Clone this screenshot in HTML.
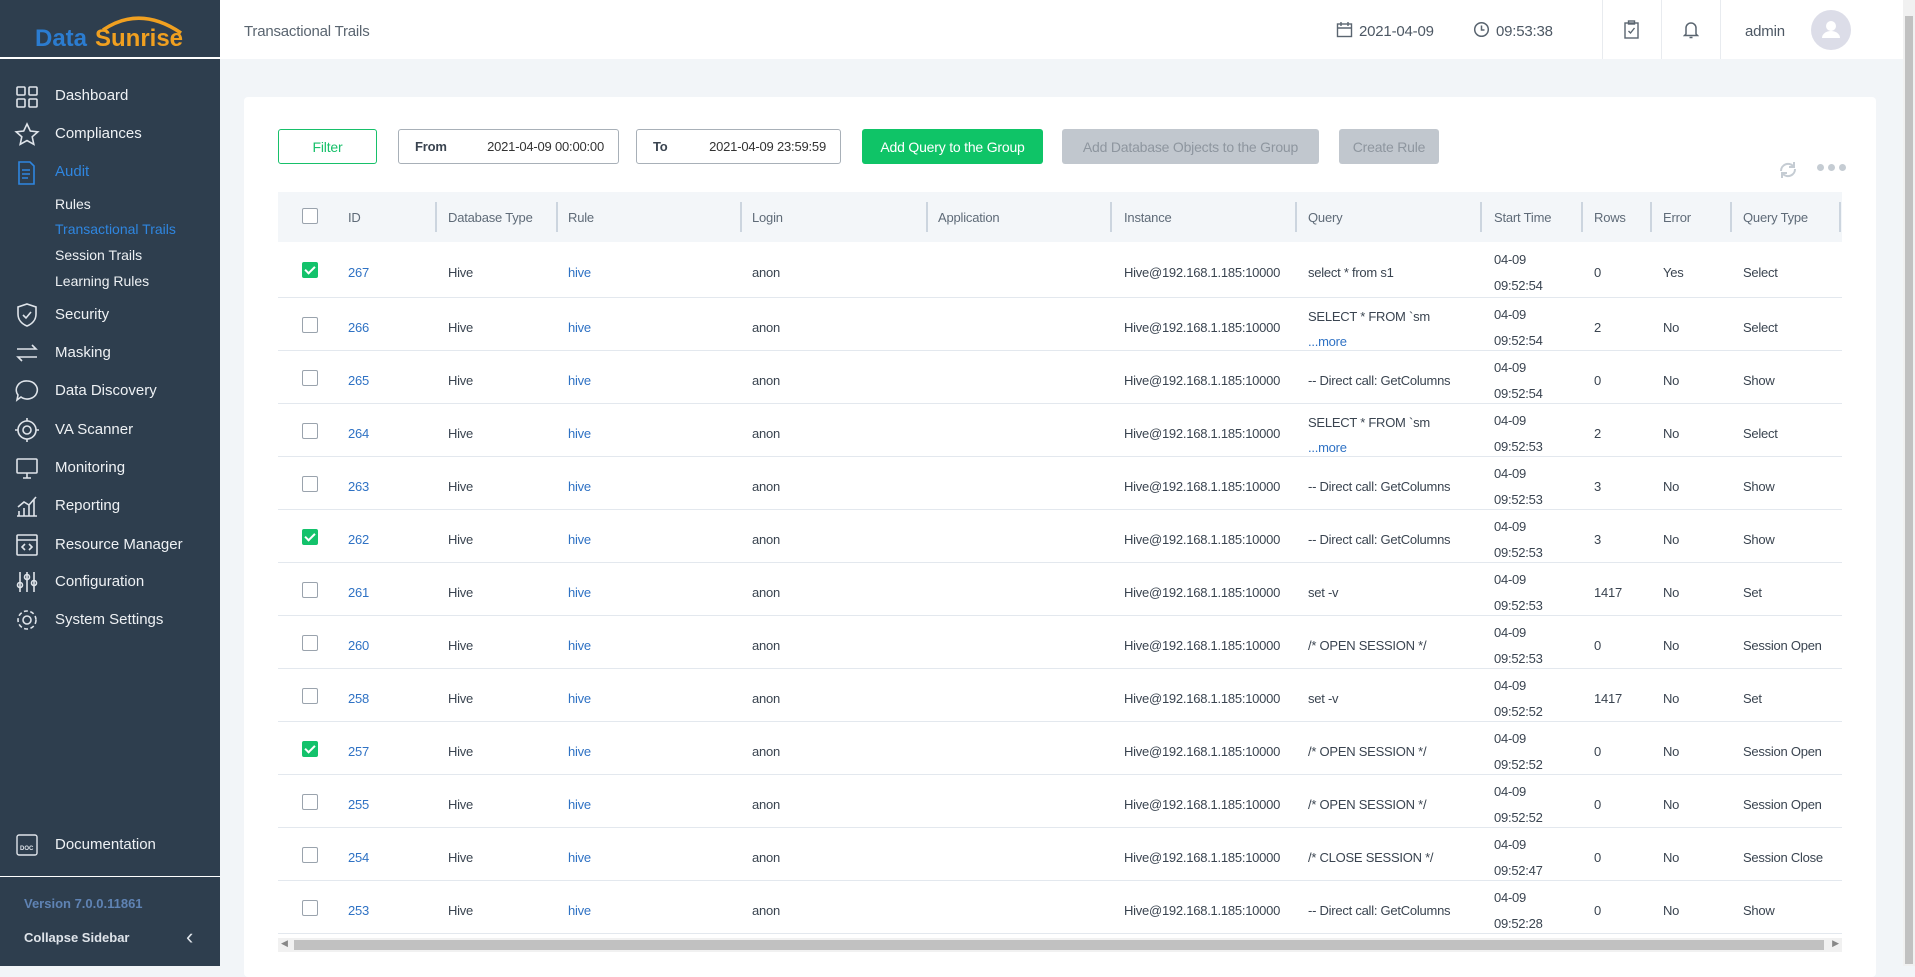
<!DOCTYPE html>
<html><head><meta charset="utf-8"><style>
*{box-sizing:border-box;margin:0;padding:0}
body{width:1915px;height:966px;overflow:hidden;background:#f2f5f8;font-family:"Liberation Sans",sans-serif;position:relative;color:#3a4450}
.sb{position:absolute;left:0;top:0;width:220px;height:966px;background:#2e3e4e;color:#e8ecf0}
.logo{height:59px;border-bottom:2px solid #fff;position:relative}
.mi{position:absolute;left:55px;font-size:15px;color:#eef1f4;margin-top:2px}
.ic{position:absolute;left:14px;width:26px;height:26px;margin-top:2px}
.sub{position:absolute;left:55px;font-size:14px;color:#eef1f4;margin-top:1px}
.hdr{position:absolute;left:220px;top:0;width:1683px;height:59px;background:#fff}
.sep{position:absolute;top:0;width:1px;height:59px;background:#e8ebef}
.card{position:absolute;left:244px;top:97px;width:1632px;height:880px;background:#fff;border-radius:4px}
.btn{position:absolute;top:129px;height:35px;border-radius:3px;font-size:14px;display:flex;align-items:center;justify-content:center;letter-spacing:-0.2px}
.th{position:absolute;left:278px;top:192px;width:1564px;height:50px;background:#f3f6f9}
.th span{position:absolute;top:18px;font-size:13px;color:#5f6b78;letter-spacing:-0.2px}
.th i{position:absolute;top:10px;width:2px;height:30px;background:#ccd5df}
.row{position:absolute;left:278px;width:1564px;border-bottom:1px solid #e3e8ee;font-size:13px;color:#3a4450;letter-spacing:-0.25px}
.row span{position:absolute;margin-top:3px}
.cb{position:absolute;left:24px;width:16px;height:16px;border:1px solid #9aa3ad;border-radius:2px;background:#fff}
.cb.on{background:#13c26b;border-color:#13c26b}
.cb.on:after{content:"";position:absolute;left:4px;top:1px;width:4px;height:8px;border:solid #fff;border-width:0 2px 2px 0;transform:rotate(45deg)}
.lk{color:#2f72c4}
.ht{position:absolute;top:23px;font-size:15px;color:#4d5864;letter-spacing:-0.2px}
</style></head><body>
<div class="sb">
 <div class="logo"><svg width="220" height="59" style="position:absolute;left:0;top:0"><path d="M103 30 Q140 5 181 33" stroke="#f0a020" stroke-width="3.5" fill="none"/><text x="35" y="46" font-family="Liberation Sans" font-weight="bold" font-size="24" fill="#2b7cd0">Data</text><text x="95" y="46" font-family="Liberation Sans" font-weight="bold" font-size="24" fill="#f0a020">Sunrise</text></svg></div>
 <svg class="ic" style="top:82px" viewBox="0 0 26 26" fill="none" stroke="#dfe4ea" stroke-width="1.6"><rect x="3" y="3" width="8" height="8" rx="1"/><rect x="15" y="3" width="8" height="8" rx="1"/><rect x="3" y="15" width="8" height="8" rx="1"/><rect x="15" y="15" width="8" height="8" rx="1"/></svg>
 <div class="mi" style="top:85px">Dashboard</div>
 <svg class="ic" style="top:120px" viewBox="0 0 26 26" fill="none" stroke="#dfe4ea" stroke-width="1.6"><path d="M13 2l3.3 7 7.5.8-5.6 5 1.6 7.5L13 18.5 6.2 22.3l1.6-7.5-5.6-5 7.5-.8z"/></svg>
 <div class="mi" style="top:123px">Compliances</div>
 <svg class="ic" style="top:158px" viewBox="0 0 26 26" fill="none" stroke="#2f86e0" stroke-width="1.6"><path d="M5 2h11l4 4v18H5z"/><path d="M8 10h8M8 14h8M8 18h6"/></svg>
 <div class="mi" style="top:161px;color:#2f86e0">Audit</div>
 <div class="sub" style="top:195px">Rules</div>
 <div class="sub" style="top:220px;color:#2f86e0">Transactional Trails</div>
 <div class="sub" style="top:246px">Session Trails</div>
 <div class="sub" style="top:272px">Learning Rules</div>
 <svg class="ic" style="top:300px" viewBox="0 0 26 26" fill="none" stroke="#dfe4ea" stroke-width="1.6"><path d="M13 2l9 3v7c0 6-4 10-9 12-5-2-9-6-9-12V5z"/><path d="M9 13l3 3 5-6"/></svg>
 <div class="mi" style="top:342px">Masking</div>
 <div class="mi" style="top:304px">Security</div>
 <svg class="ic" style="top:338px" viewBox="0 0 26 26" fill="none" stroke="#dfe4ea" stroke-width="1.6"><path d="M3 9h19l-4-4M23 17H4l4 4"/></svg>
 <svg class="ic" style="top:376px" viewBox="0 0 26 26" fill="none" stroke="#dfe4ea" stroke-width="1.6"><path d="M13 3a10 9 0 1 1-6 16l-4 3 1-5A10 9 0 0 1 13 3z"/></svg>
 <div class="mi" style="top:380px">Data Discovery</div>
 <svg class="ic" style="top:415px" viewBox="0 0 26 26" fill="none" stroke="#dfe4ea" stroke-width="1.6"><circle cx="13" cy="13" r="9"/><circle cx="13" cy="13" r="4"/><path d="M13 1v3M13 22v3M1 13h3M22 13h3"/></svg>
 <div class="mi" style="top:419px">VA Scanner</div>
 <svg class="ic" style="top:453px" viewBox="0 0 26 26" fill="none" stroke="#dfe4ea" stroke-width="1.6"><rect x="3" y="4" width="20" height="14" rx="1"/><path d="M9 23h8M13 18v5"/></svg>
 <div class="mi" style="top:457px">Monitoring</div>
 <svg class="ic" style="top:491px" viewBox="0 0 26 26" fill="none" stroke="#dfe4ea" stroke-width="1.6"><path d="M3 23h20M5 23v-5M10 23v-8M15 23v-11M20 23V6M4 14l6-5 5 3 7-8"/></svg>
 <div class="mi" style="top:495px">Reporting</div>
 <svg class="ic" style="top:530px" viewBox="0 0 26 26" fill="none" stroke="#dfe4ea" stroke-width="1.6"><rect x="3" y="3" width="20" height="20" rx="1"/><path d="M3 8h20M11 12l-3 3 3 3M15 12l3 3-3 3"/></svg>
 <div class="mi" style="top:534px">Resource Manager</div>
 <svg class="ic" style="top:567px" viewBox="0 0 26 26" fill="none" stroke="#dfe4ea" stroke-width="1.6"><path d="M6 3v20M13 3v20M20 3v20"/><circle cx="6" cy="16" r="2.5"/><circle cx="13" cy="8" r="2.5"/><circle cx="20" cy="14" r="2.5"/></svg>
 <div class="mi" style="top:571px">Configuration</div>
 <svg class="ic" style="top:605px" viewBox="0 0 26 26" fill="none" stroke="#dfe4ea" stroke-width="1.6"><circle cx="13" cy="13" r="4"/><circle cx="13" cy="13" r="9" stroke-dasharray="4 2.5"/></svg>
 <div class="mi" style="top:609px">System Settings</div>
 <svg class="ic" style="top:830px" viewBox="0 0 26 26" fill="none" stroke="#dfe4ea" stroke-width="1.4"><rect x="3" y="3" width="20" height="20" rx="2"/><text x="6" y="18" font-size="6" fill="#dfe4ea" stroke="none" font-family="Liberation Sans" font-weight="bold">DOC</text></svg>
 <div class="mi" style="top:834px">Documentation</div>
 <div style="position:absolute;left:0;top:876px;width:220px;height:1px;background:#fff"></div>
 <div style="position:absolute;left:24px;top:896px;font-size:13px;font-weight:bold;color:#5f83b4">Version 7.0.0.11861</div>
 <div style="position:absolute;left:24px;top:930px;font-size:13px;font-weight:bold;color:#dfe4ea">Collapse Sidebar</div>
 <div style="position:absolute;left:186px;top:924px;font-size:22px;color:#dfe4ea">‹</div>
</div>
<div class="hdr">
 <div class="ht" style="left:24px;color:#5a6570">Transactional Trails</div>
 <svg style="position:absolute;left:1116px;top:21px" width="17" height="17" viewBox="0 0 17 17" fill="none" stroke="#5a6570" stroke-width="1.4"><rect x="1.5" y="3" width="14" height="12.5"/><path d="M1.5 7h14M5 1v4M12 1v4"/></svg>
 <div class="ht" style="left:1139px">2021-04-09</div>
 <svg style="position:absolute;left:1253px;top:21px" width="17" height="17" viewBox="0 0 17 17" fill="none" stroke="#5a6570" stroke-width="1.5"><circle cx="8.5" cy="8.5" r="6.8"/><path d="M8.5 4.5v4.5h3"/></svg>
 <div class="ht" style="left:1276px">09:53:38</div>
 <div class="sep" style="left:1382px"></div><div class="sep" style="left:1441px"></div><div class="sep" style="left:1500px"></div>
 <svg style="position:absolute;left:1404px;top:20px" width="15" height="19" viewBox="0 0 15 19" fill="none" stroke="#5a6570" stroke-width="1.4"><rect x="1" y="3" width="13" height="15"/><rect x="4.5" y="1" width="6" height="3"/><path d="M4.5 11l2 2 4-5"/></svg>
 <svg style="position:absolute;left:1463px;top:20px" width="16" height="19" viewBox="0 0 16 19" fill="none" stroke="#5a6570" stroke-width="1.5"><path d="M3 14V8a5 5 0 0 1 10 0v6l1.5 1.5h-13zM6.5 17.5h3"/></svg>
 <div class="ht" style="left:1525px">admin</div>
 <div style="position:absolute;left:1591px;top:10px;width:40px;height:40px;border-radius:50%;background:#dcdde8"><svg width="40" height="40" viewBox="0 0 40 40"><circle cx="20" cy="16" r="5" fill="#fff"/><path d="M11 28a9 7 0 0 1 18 0z" fill="#fff"/></svg></div>
</div>
<div style="position:absolute;left:1903px;top:0;width:12px;height:966px;background:#f1f1f1"><div style="position:absolute;left:2px;top:16px;width:8px;height:948px;background:#c1c1c1"></div></div>
<div class="card"></div>
<div class="btn" style="left:278px;width:99px;border:1px solid #17c06a;color:#17c06a;background:#fff">Filter</div>
<div class="btn" style="left:398px;width:221px;border:1px solid #a8b0b8;justify-content:space-between;padding:0 14px 0 16px;font-size:13px;color:#333"><b style="font-weight:bold;color:#3a4450">From</b><span>2021-04-09 00:00:00</span></div>
<div class="btn" style="left:636px;width:205px;border:1px solid #a8b0b8;justify-content:space-between;padding:0 14px 0 16px;font-size:13px;color:#333"><b style="color:#3a4450">To</b><span>2021-04-09 23:59:59</span></div>
<div class="btn" style="left:862px;width:181px;background:#0fc467;color:#fff">Add Query to the Group</div>
<div class="btn" style="left:1062px;width:257px;background:#c1c7ce;color:#8e969f">Add Database Objects to the Group</div>
<div class="btn" style="left:1339px;width:100px;background:#c1c7ce;color:#8e969f">Create Rule</div>
<svg style="position:absolute;left:1778px;top:159px" width="20" height="22" viewBox="0 0 20 22" fill="none" stroke="#c5ccd3" stroke-width="2"><path d="M3 12a7 7 0 0 1 12-5l1 1M17 10a7 7 0 0 1-12 5l-1-1M16 3v5h-5M4 19v-5h5"/></svg>
<div style="position:absolute;left:1817px;top:164px;display:flex;gap:4px"><i style="width:7px;height:7px;border-radius:50%;background:#c5ccd3"></i><i style="width:7px;height:7px;border-radius:50%;background:#c5ccd3"></i><i style="width:7px;height:7px;border-radius:50%;background:#c5ccd3"></i></div>
<div class="th">
 <div class="cb" style="top:16px"></div>
 <span style="left:70px">ID</span><i style="left:157px"></i>
 <span style="left:170px">Database Type</span><i style="left:278px"></i>
 <span style="left:290px">Rule</span><i style="left:462px"></i>
 <span style="left:474px">Login</span><i style="left:648px"></i>
 <span style="left:660px">Application</span><i style="left:832px"></i>
 <span style="left:846px">Instance</span><i style="left:1017px"></i>
 <span style="left:1030px">Query</span><i style="left:1202px"></i>
 <span style="left:1216px">Start Time</span><i style="left:1303px"></i>
 <span style="left:1316px">Rows</span><i style="left:1372px"></i>
 <span style="left:1385px">Error</span><i style="left:1452px"></i>
 <span style="left:1465px">Query Type</span><i style="left:1561px"></i>
</div>
<div id="rows"></div>
<div style="position:absolute;left:278px;top:938px;width:1564px;height:14px;background:#f1f1f1"><div style="position:absolute;left:16px;top:2px;width:1530px;height:10px;background:#c1c1c1"></div><span style="position:absolute;left:3px;top:0;font-size:9px;color:#888">◀</span><span style="position:absolute;right:3px;top:0;font-size:9px;color:#888">▶</span></div>
<script>
var d=[[267,1,"select * from s1","09:52:54",0,"Yes","Select"],[266,0,"M","09:52:54",2,"No","Select"],[265,0,"-- Direct call: GetColumns","09:52:54",0,"No","Show"],[264,0,"M","09:52:53",2,"No","Select"],[263,0,"-- Direct call: GetColumns","09:52:53",3,"No","Show"],[262,1,"-- Direct call: GetColumns","09:52:53",3,"No","Show"],[261,0,"set -v","09:52:53",1417,"No","Set"],[260,0,"/* OPEN SESSION */","09:52:53",0,"No","Session Open"],[258,0,"set -v","09:52:52",1417,"No","Set"],[257,1,"/* OPEN SESSION */","09:52:52",0,"No","Session Open"],[255,0,"/* OPEN SESSION */","09:52:52",0,"No","Session Open"],[254,0,"/* CLOSE SESSION */","09:52:47",0,"No","Session Close"],[253,0,"-- Direct call: GetColumns","09:52:28",0,"No","Show"]];
var h="";d.forEach(function(r,i){var top=i==0?242:298+(i-1)*53,ht=i==0?56:53,c=ht/2-8;
var q=r[2]=="M"?'<span style="left:1030px;top:'+(c-11)+'px">SELECT * FROM `sm</span><span class="lk" style="left:1030px;top:'+(c+14)+'px">...more</span>':'<span style="left:1030px;top:'+c+'px">'+r[2]+'</span>';
h+='<div class="row" style="top:'+top+'px;height:'+ht+'px"><div class="cb'+(r[1]?' on':'')+'" style="top:'+(ht/2-8)+'px"></div><span class="lk" style="left:70px;top:'+c+'px">'+r[0]+'</span><span style="left:170px;top:'+c+'px">Hive</span><span class="lk" style="left:290px;top:'+c+'px">hive</span><span style="left:474px;top:'+c+'px">anon</span><span style="left:846px;top:'+c+'px">Hive@192.168.1.185:10000</span>'+q+'<span style="left:1216px;top:'+(c-13)+'px">04-09</span><span style="left:1216px;top:'+(c+13)+'px">'+r[3]+'</span><span style="left:1316px;top:'+c+'px">'+r[4]+'</span><span style="left:1385px;top:'+c+'px">'+r[5]+'</span><span style="left:1465px;top:'+c+'px">'+r[6]+'</span></div>'});
document.getElementById("rows").innerHTML=h;
</script>
</body></html>
